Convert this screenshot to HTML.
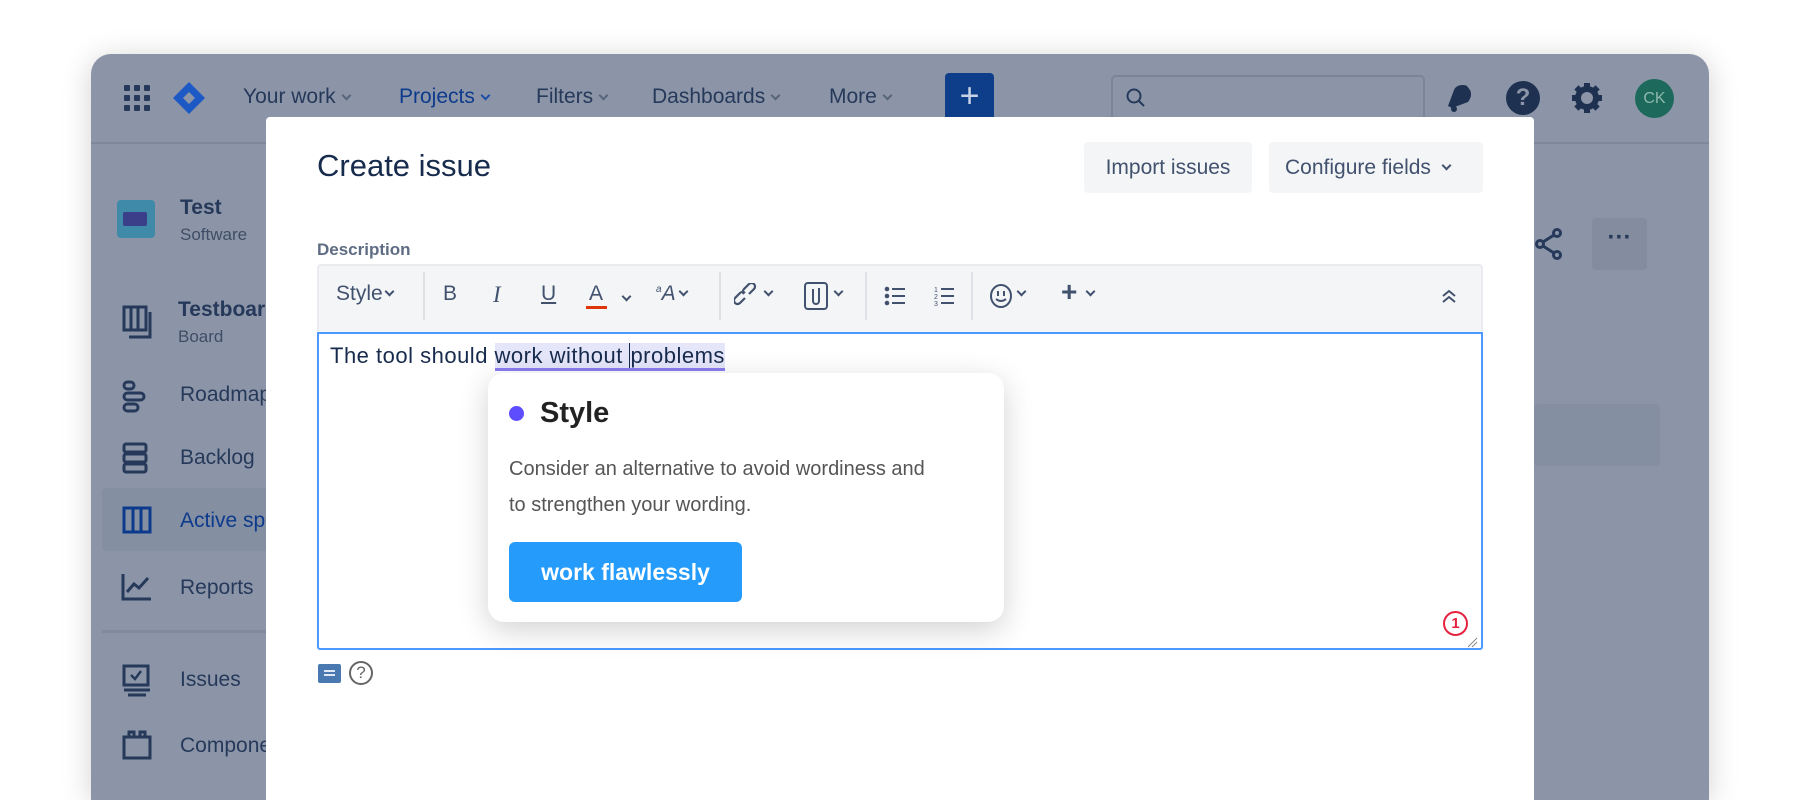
<!DOCTYPE html>
<html style="overflow:hidden;width:1800px;height:800px"><head><style>
*{box-sizing:border-box;margin:0;padding:0}
body{width:1800px;height:800px;background:#fff;position:relative;overflow:hidden;font-family:"Liberation Sans",sans-serif}
.a{position:absolute}
.win{left:91px;top:54px;width:1618px;height:746px;background:#8b95a7;border-radius:20px 20px 0 0;box-shadow:0 4px 30px rgba(0,0,0,.18);overflow:hidden}
.nav{color:#26395a;font-size:21px}
.chev{display:inline-block;width:7px;height:7px;border-right:2px solid #56647c;border-bottom:2px solid #56647c;transform:rotate(45deg);margin-left:7px;position:relative;top:-4px}
.side{color:#26395a;font-size:21px}
.sub{color:#3f4d66;font-size:17px}
.tb{color:#42526e;font-size:21px;top:282px}
.sep{top:272px;width:2px;height:48px;background:#dfe1e6}
.tchev{display:inline-block;width:7px;height:7px;border-right:2px solid #42526e;border-bottom:2px solid #42526e;transform:rotate(45deg)}
</style></head><body>
<div class="a win">
 <div class="a" style="left:0;top:88px;width:1618px;height:2px;background:#7d889b"></div>
</div>
<svg class="a" style="left:124px;top:85px" width="26" height="26"><g fill="#26395a"><rect x="0" y="0" width="6" height="6" rx="1"/><rect x="10" y="0" width="6" height="6" rx="1"/><rect x="20" y="0" width="6" height="6" rx="1"/><rect x="0" y="10" width="6" height="6" rx="1"/><rect x="10" y="10" width="6" height="6" rx="1"/><rect x="20" y="10" width="6" height="6" rx="1"/><rect x="0" y="20" width="6" height="6" rx="1"/><rect x="10" y="20" width="6" height="6" rx="1"/><rect x="20" y="20" width="6" height="6" rx="1"/></g></svg>
<svg class="a" style="left:172px;top:81px" width="34" height="34"><path d="M17 1L33 17 17 33 1 17Z" fill="#1d59c4"/><path d="M17 11L23 17 17 23 11 17Z" fill="#8b95a7"/></svg>
<div class="a nav" style="left:243px;top:85px">Your work<span class="chev"></span></div>
<div class="a nav" style="left:399px;top:85px;color:#0d3a8c">Projects<span class="chev" style="border-color:#1d4fa8"></span></div>
<div class="a nav" style="left:536px;top:85px">Filters<span class="chev"></span></div>
<div class="a nav" style="left:652px;top:85px">Dashboards<span class="chev"></span></div>
<div class="a nav" style="left:829px;top:85px">More<span class="chev"></span></div>
<div class="a" style="left:945px;top:73px;width:49px;height:60px;background:#0e3d8a;border-radius:4px;color:#c9d3e6;font-size:34px;text-align:center;line-height:46px">+</div>
<div class="a" style="left:1111px;top:75px;width:314px;height:60px;border:2px solid #7a8598;border-radius:5px;background:#8b95a7"></div>
<svg class="a" style="left:1125px;top:87px" width="22" height="22"><circle cx="9" cy="9" r="6.5" fill="none" stroke="#26395a" stroke-width="2"/><path d="M14 14l5 5" stroke="#26395a" stroke-width="2"/></svg>
<svg class="a" style="left:1446px;top:82px" width="30" height="32"><path d="M6 26L2 24 8 8C10 3 17 2 21 4L24 8C26 12 25 16 22 20Z" fill="#1f3151"/><circle cx="8" cy="27" r="3" fill="#1f3151"/></svg>
<div class="a" style="left:1506px;top:81px;width:34px;height:34px;border-radius:50%;background:#1f3151;color:#8b95a7;font-weight:bold;font-size:24px;text-align:center;line-height:34px">?</div>
<svg class="a" style="left:1570px;top:81px" width="34" height="34" viewBox="0 0 34 34"><g fill="#1f3151"><circle cx="17" cy="17" r="12"/><rect x="14" y="2" width="6" height="30"/><rect x="2" y="14" width="30" height="6"/><rect x="14" y="2" width="6" height="30" transform="rotate(45 17 17)"/><rect x="14" y="2" width="6" height="30" transform="rotate(-45 17 17)"/></g><circle cx="17" cy="17" r="6" fill="#8b95a7"/></svg>
<div class="a" style="left:1635px;top:79px;width:39px;height:39px;border-radius:50%;background:#1d6a5c;color:#8fb8ae;font-size:16px;text-align:center;line-height:39px">CK</div>
<div class="a" style="left:117px;top:200px;width:38px;height:38px;border-radius:4px;background:#3e8aa8"></div>
<div class="a" style="left:123px;top:212px;width:24px;height:14px;background:#3b3f8a;border-radius:2px"></div>
<div class="a side" style="left:180px;top:196px;font-weight:bold">Test</div>
<div class="a sub" style="left:180px;top:225px">Software</div>
<svg class="a" style="left:122px;top:304px" width="34" height="36"><path d="M2 3h22v23H2z M9 3v23 M16 3v23" fill="none" stroke="#26395a" stroke-width="3"/><path d="M28 8v25H7" fill="none" stroke="#26395a" stroke-width="3"/></svg>
<div class="a side" style="left:178px;top:298px;font-weight:bold">Testboard</div>
<div class="a sub" style="left:178px;top:327px">Board</div>
<svg class="a" style="left:122px;top:380px" width="26" height="34"><g fill="none" stroke="#26395a" stroke-width="3"><rect x="2" y="2" width="10" height="7" rx="3.5"/><rect x="2" y="13" width="20" height="7" rx="3.5"/><rect x="2" y="24" width="14" height="7" rx="3.5"/></g></svg>
<div class="a side" style="left:180px;top:383px">Roadmap</div>
<svg class="a" style="left:122px;top:442px" width="26" height="32"><g fill="none" stroke="#26395a" stroke-width="3"><rect x="2" y="2" width="22" height="8" rx="2"/><rect x="2" y="12" width="22" height="8" rx="2"/><rect x="2" y="22" width="22" height="8" rx="2"/></g></svg>
<div class="a side" style="left:180px;top:446px">Backlog</div>
<div class="a" style="left:102px;top:488px;width:180px;height:63px;background:#8490a2;border-radius:4px"></div>
<svg class="a" style="left:122px;top:506px" width="30" height="28"><path d="M2 2h26v24H2z M11 2v24 M19 2v24" fill="none" stroke="#0d3a8c" stroke-width="3"/></svg>
<div class="a side" style="left:180px;top:509px;color:#0d3a8c">Active sprint</div>
<svg class="a" style="left:121px;top:572px" width="32" height="30"><path d="M2 2v25h28 M6 20l7-8 5 4 9-10" fill="none" stroke="#26395a" stroke-width="3"/></svg>
<div class="a side" style="left:180px;top:576px">Reports</div>
<div class="a" style="left:102px;top:630px;width:180px;height:3px;background:#7f8a9c"></div>
<svg class="a" style="left:122px;top:664px" width="30" height="34"><rect x="2" y="2" width="24" height="19" fill="none" stroke="#26395a" stroke-width="3"/><path d="M9 11l4 4 6-8" fill="none" stroke="#26395a" stroke-width="2.5"/><path d="M2 26h26 M6 31h18" stroke="#26395a" stroke-width="3"/></svg>
<div class="a side" style="left:180px;top:668px">Issues</div>
<svg class="a" style="left:122px;top:730px" width="30" height="30"><rect x="2" y="7" width="26" height="21" fill="none" stroke="#26395a" stroke-width="3"/><path d="M7 7V2h5v5 M18 7V2h5v5" fill="none" stroke="#26395a" stroke-width="3"/></svg>
<div class="a side" style="left:180px;top:734px">Components</div>
<svg class="a" style="left:1535px;top:228px" width="30" height="32"><g fill="none" stroke="#26395a" stroke-width="3"><circle cx="22" cy="5" r="3.5"/><circle cx="22" cy="27" r="3.5"/><circle cx="5" cy="16" r="3.5"/><path d="M8 14l11-7 M8 18l11 7"/></g></svg>
<div class="a" style="left:1592px;top:218px;width:55px;height:52px;background:#838d9f;border-radius:4px;color:#26395a;font-size:24px;text-align:center;line-height:40px;font-weight:bold">···</div>
<div class="a" style="left:1534px;top:404px;width:126px;height:62px;background:#8490a2;border-radius:4px"></div>
<div class="a" style="left:266px;top:117px;width:1268px;height:683px;background:#fff;border-radius:4px 4px 0 0"></div>
<div class="a" style="left:317px;top:148px;font-size:31px;color:#172b4d">Create issue</div>
<div class="a" style="left:1084px;top:142px;width:168px;height:51px;background:#f4f5f7;border-radius:4px;color:#42526e;font-size:21px;text-align:center;line-height:51px">Import issues</div>
<div class="a" style="left:1269px;top:142px;width:214px;height:51px;background:#f4f5f7;border-radius:4px;color:#42526e;font-size:21px;line-height:51px;padding-left:16px">Configure fields <span class="tchev" style="position:relative;top:-5px;margin-left:6px"></span></div>
<div class="a" style="left:317px;top:240px;font-size:17px;font-weight:bold;color:#5e6c84">Description</div>
<div class="a" style="left:317px;top:264px;width:1166px;height:70px;background:#f4f5f7;border:2px solid #ebecf0;border-bottom:none;border-radius:4px 4px 0 0"></div>
<div class="a tb" style="left:336px">Style<span class="tchev" style="position:relative;top:-5px;margin-left:3px"></span></div>
<div class="a sep" style="left:423px"></div>
<div class="a tb" style="left:443px">B</div>
<div class="a tb" style="left:493px;font-style:italic;font-family:'Liberation Serif',serif;font-size:23px">I</div>
<div class="a tb" style="left:541px;text-decoration:underline">U</div>
<div class="a tb" style="left:589px">A</div>
<div class="a" style="left:586px;top:306px;width:21px;height:3px;background:#de350b"></div>
<div class="a tb" style="left:623px"><span class="tchev"></span></div>
<div class="a tb" style="left:656px;font-style:italic"><sup style="font-size:10px">a</sup>A<span class="tchev" style="margin-left:4px;position:relative;top:-5px"></span></div>
<div class="a sep" style="left:719px"></div>
<svg class="a" style="left:734px;top:283px" width="26" height="26"><g fill="none" stroke="#42526e" stroke-width="2.2"><path d="M11 15l-5 5a3.5 3.5 0 01-5-5l5-5a3.5 3.5 0 015 0"/><path d="M15 11l5-5a3.5 3.5 0 00-5-5l-5 5a3.5 3.5 0 000 5"/></g></svg>
<div class="a tb" style="left:765px"><span class="tchev" style="position:relative;top:-5px"></span></div>
<svg class="a" style="left:804px;top:282px" width="24" height="28"><rect x="1" y="1" width="22" height="26" rx="3" fill="none" stroke="#42526e" stroke-width="2"/><path d="M9 7v12a3 3 0 006 0V6" fill="none" stroke="#42526e" stroke-width="2"/></svg>
<div class="a tb" style="left:835px"><span class="tchev" style="position:relative;top:-5px"></span></div>
<div class="a sep" style="left:865px"></div>
<svg class="a" style="left:884px;top:286px" width="22" height="20"><g fill="#42526e"><circle cx="3" cy="3" r="2.3"/><circle cx="3" cy="10" r="2.3"/><circle cx="3" cy="17" r="2.3"/><rect x="8" y="2" width="13" height="2"/><rect x="8" y="9" width="13" height="2"/><rect x="8" y="16" width="13" height="2"/></g></svg>
<svg class="a" style="left:934px;top:285px" width="22" height="22"><g fill="#42526e" font-size="7" font-family="Liberation Sans"><text x="0" y="7">1</text><text x="0" y="14">2</text><text x="0" y="21">3</text><rect x="7" y="3" width="13" height="2"/><rect x="7" y="10" width="13" height="2"/><rect x="7" y="17" width="13" height="2"/></g></svg>
<div class="a sep" style="left:971px"></div>
<svg class="a" style="left:989px;top:283px" width="24" height="26"><ellipse cx="12" cy="13" rx="10" ry="11" fill="none" stroke="#42526e" stroke-width="2"/><path d="M9 8v5 M15 8v5 M7 16q5 4 10 0" fill="none" stroke="#42526e" stroke-width="2"/></svg>
<div class="a tb" style="left:1018px"><span class="tchev" style="position:relative;top:-5px"></span></div>
<div class="a tb" style="left:1061px;font-weight:bold;font-size:28px;top:276px">+</div>
<div class="a tb" style="left:1087px"><span class="tchev" style="position:relative;top:-5px"></span></div>
<svg class="a" style="left:1441px;top:288px" width="16" height="16"><path d="M2 8l6-5 6 5 M2 14l6-5 6 5" fill="none" stroke="#42526e" stroke-width="2"/></svg>
<div class="a" style="left:317px;top:332px;width:1166px;height:318px;border:2px solid #4c9aff;border-radius:0 0 3px 3px"></div>
<div class="a" style="left:330px;top:342px;font-size:22px;letter-spacing:0.5px;color:#172b4d;line-height:28px;white-space:nowrap">The tool should <span style="background:#e6e6fb;border-bottom:3px solid #8b7cf0">work without <span style="border-left:1px solid #172b4d"></span>problems</span></div>
<div class="a" style="left:1443px;top:611px;width:25px;height:25px;border:2px solid #e5223f;border-radius:50%;color:#e5223f;font-size:15px;font-weight:bold;text-align:center;line-height:21px">1</div>
<svg class="a" style="left:1466px;top:636px" width="12" height="12"><path d="M2 11L11 2 M6 11l5-5" stroke="#888" stroke-width="1"/></svg>
<div class="a" style="left:318px;top:664px;width:23px;height:19px;background:#4a78b0;border-radius:2px"></div>
<div class="a" style="left:324px;top:670px;width:11px;height:2px;background:#dfe8f4;box-shadow:0 4px 0 #dfe8f4"></div>
<div class="a" style="left:349px;top:661px;width:24px;height:24px;border:2px solid #666;border-radius:50%;color:#666;font-size:17px;text-align:center;line-height:20px">?</div>
<div class="a" style="left:488px;top:373px;width:516px;height:249px;background:#fff;border-radius:16px;box-shadow:0 8px 30px rgba(0,0,0,.18)"></div>
<div class="a" style="left:509px;top:406px;width:15px;height:15px;border-radius:50%;background:#5d4dff"></div>
<div class="a" style="left:540px;top:397px;font-size:29px;font-weight:bold;color:#222">Style</div>
<div class="a" style="left:509px;top:451px;width:425px;font-size:20px;color:#555;line-height:36px">Consider an alternative to avoid wordiness and to strengthen your wording.</div>
<div class="a" style="left:509px;top:542px;width:233px;height:60px;background:#259cfb;border-radius:6px;color:#fff;font-size:23px;font-weight:bold;text-align:center;line-height:60px">work flawlessly</div>
</body></html>
